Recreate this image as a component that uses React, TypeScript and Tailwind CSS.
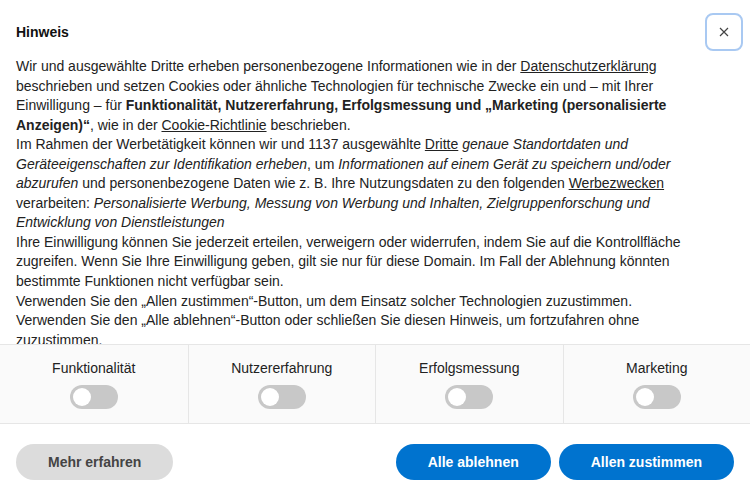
import React from "react";

const purposes = ["Funktionalität", "Nutzererfahrung", "Erfolgsmessung", "Marketing"];

const Toggle = () => (
  <div className="w-12 h-6 rounded-full bg-[#c8c8c8] p-[3px] flex items-center">
    <div className="w-[18px] h-[18px] rounded-full bg-white" />
  </div>
);

const App = () => {
  return (
    <div
      className="w-[750px] h-[500px] bg-white text-[#222] flex flex-col overflow-hidden"
      style={{ fontFamily: '"Liberation Sans", Arial, sans-serif' }}
    >
      {/* Header */}
      <div className="flex items-center justify-between pl-4 pr-[7px] pt-[13px]">
        <h2 className="text-sm font-bold text-[#111]">Hinweis</h2>
        <button className="w-[38px] h-[38px] rounded-lg border-2 border-[#a9c9f2] flex items-center justify-center text-[#444]">
          <svg width="10" height="10" viewBox="0 0 10 10" stroke="currentColor" strokeWidth="1.2">
            <path d="M1 1L9 9M9 1L1 9" />
          </svg>
        </button>
      </div>

      {/* Body text */}
      <div className="mt-[6px] h-[287px] overflow-hidden px-4 pr-[60px] text-sm leading-[19.55px]">
        <p>
          Wir und ausgewählte Dritte erheben personenbezogene Informationen wie in der{" "}
          <span className="underline">Datenschutzerklärung</span> beschrieben und setzen Cookies oder
          ähnliche Technologien für technische Zwecke ein und – mit Ihrer Einwilligung – für{" "}
          <b>Funktionalität, Nutzererfahrung, Erfolgsmessung und „Marketing (personalisierte Anzeigen)“</b>, wie in
          der <span className="underline">Cookie-Richtlinie</span> beschrieben.
        </p>
        <p>
          Im Rahmen der Werbetätigkeit können wir und 1137 ausgewählte <span className="underline">Dritte</span>{" "}
          <i>genaue Standortdaten und Geräteeigenschaften zur Identifikation erheben</i>, um{" "}
          <i>Informationen auf einem Gerät zu speichern und/oder abzurufen</i> und personenbezogene Daten wie z. B.
          Ihre Nutzungsdaten zu den folgenden <span className="underline">Werbezwecken</span> verarbeiten:{" "}
          <i>
            Personalisierte Werbung, Messung von Werbung und Inhalten, Zielgruppenforschung und Entwicklung von
            Dienstleistungen
          </i>
        </p>
        <p>
          Ihre Einwilligung können Sie jederzeit erteilen, verweigern oder widerrufen, indem Sie auf die
          Kontrollfläche zugreifen. Wenn Sie Ihre Einwilligung geben, gilt sie nur für diese Domain. Im Fall der
          Ablehnung könnten bestimmte Funktionen nicht verfügbar sein.
        </p>
        <p>Verwenden Sie den „Allen zustimmen“-Button, um dem Einsatz solcher Technologien zuzustimmen.</p>
        <p>
          Verwenden Sie den „Alle ablehnen“-Button oder schließen Sie diesen Hinweis, um fortzufahren ohne
          zuzustimmen.
        </p>
      </div>

      {/* Purpose toggles */}
      <div className="grid grid-cols-4 border-y border-[#e6e6e6] bg-[#fafafa]">
        {purposes.map((p, i) => (
          <div
            key={p}
            className={`flex flex-col items-center gap-2 pt-[14px] pb-[14px] ${i > 0 ? "border-l border-[#e6e6e6]" : ""}`}
          >
            <span className="text-sm leading-[18px] text-[#222]">{p}</span>
            <Toggle />
          </div>
        ))}
      </div>

      {/* Actions */}
      <div className="flex items-center justify-between px-4 pt-5">
        <button className="h-9 px-8 rounded-full bg-[#dcdcdc] text-sm font-bold text-[#444]">Mehr erfahren</button>
        <div className="flex gap-2">
          <button className="h-9 px-8 rounded-full bg-[#0073cf] text-sm font-bold text-white">Alle ablehnen</button>
          <button className="h-9 px-8 rounded-full bg-[#0073cf] text-sm font-bold text-white">Allen zustimmen</button>
        </div>
      </div>
    </div>
  );
};

export default App;
